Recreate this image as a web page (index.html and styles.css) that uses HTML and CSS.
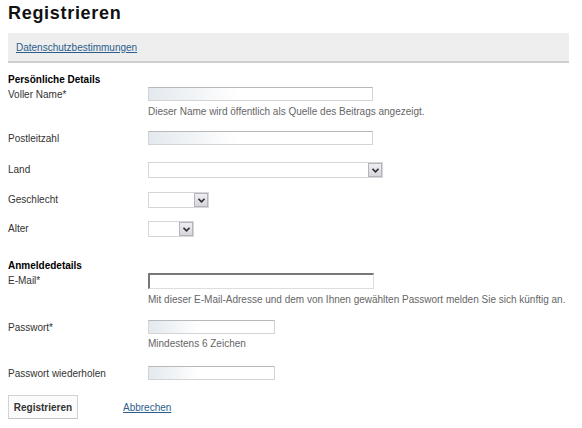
FILE: index.html
```html
<!DOCTYPE html>
<html lang="de">
<head>
<meta charset="utf-8">
<title>Registrieren</title>
<link rel="stylesheet" href="styles.css">
</head>
<body>
<div class="page">
  <h1 class="title">Registrieren</h1>
  <div class="bar"><a href="#" class="link">Datenschutzbestimmungen</a></div>

  <div class="section">
    <div class="section-title">Persönliche Details</div>
    <div class="row row-name">
      <label class="label">Voller Name*</label>
      <div class="field">
        <span class="input w224"></span>
        <div class="help">Dieser Name wird öffentlich als Quelle des Beitrags angezeigt.</div>
      </div>
    </div>
    <div class="row row-plz">
      <label class="label">Postleitzahl</label>
      <div class="field"><span class="input w224"></span></div>
    </div>
    <div class="row row-land">
      <label class="label">Land</label>
      <div class="field"><span class="select w234"><span class="arrow"><svg width="7" height="5" viewBox="0 0 7 5"><path d="M0.5 0.8 L3.5 3.8 L6.5 0.8" fill="none" stroke="#333" stroke-width="1.6"/></svg></span></span></div>
    </div>
    <div class="row row-gender">
      <label class="label">Geschlecht</label>
      <div class="field"><span class="select w60"><span class="arrow"><svg width="7" height="5" viewBox="0 0 7 5"><path d="M0.5 0.8 L3.5 3.8 L6.5 0.8" fill="none" stroke="#333" stroke-width="1.6"/></svg></span></span></div>
    </div>
    <div class="row row-age">
      <label class="label">Alter</label>
      <div class="field"><span class="select w46"><span class="arrow"><svg width="7" height="5" viewBox="0 0 7 5"><path d="M0.5 0.8 L3.5 3.8 L6.5 0.8" fill="none" stroke="#333" stroke-width="1.6"/></svg></span></span></div>
    </div>
  </div>

  <div class="section section2">
    <div class="section-title">Anmeldedetails</div>
    <div class="row row-mail">
      <label class="label">E-Mail*</label>
      <div class="field">
        <span class="input input-focus w226"></span>
        <div class="help">Mit dieser E-Mail-Adresse und dem von Ihnen gewählten Passwort melden Sie sich künftig an.</div>
      </div>
    </div>
    <div class="row row-pw">
      <label class="label">Passwort*</label>
      <div class="field">
        <span class="input w127"></span>
        <div class="help help-short">Mindestens 6 Zeichen</div>
      </div>
    </div>
    <div class="row row-pw2">
      <label class="label">Passwort wiederholen</label>
      <div class="field"><span class="input w127"></span></div>
    </div>
  </div>

  <div class="actions">
    <button class="button" type="button">Registrieren</button>
    <a href="#" class="link cancel">Abbrechen</a>
  </div>
</div>
</body>
</html>
```

FILE: styles.css
```css
html, body {
  margin: 0;
  padding: 0;
  background: #fff;
}
body {
  font-family: "Liberation Sans", Arial, sans-serif;
  font-size: 10px;
  color: #333;
}
.page {
  padding: 0 8px;
  width: 561px;
}
.title {
  margin: 0;
  padding-top: 3px;
  height: 30px;
  font-size: 18px;
  line-height: 20px;
  font-weight: bold;
  letter-spacing: 0.7px;
  color: #111;
}
.bar {
  height: 28px;
  background: #eeeeee;
  border-bottom: 2px solid #cfcfcf;
  padding-left: 8px;
  display: flex;
  align-items: center;
}
.link {
  color: #2b5d8c;
  text-decoration: underline;
  font-size: 10px;
}
.section {
  padding-top: 11px;
}
.section2 {
  padding-top: 23px;
}
.section-title {
  font-weight: bold;
  color: #000;
  font-size: 10px;
  line-height: 12px;
}
.row {
  display: grid;
  grid-template-columns: 140px 1fr;
  align-items: start;
}
.label {
  line-height: 14px;
  padding-top: 1px;
}
.field {
  display: flex;
  flex-direction: column;
  align-items: flex-start;
}
.input {
  display: block;
  box-sizing: border-box;
  height: 14px;
  border: 1px solid #d4d4d4;
  border-top-color: #b9b9b9;
  background: linear-gradient(to right, #e3e9ee 0%, #ffffff 40%, #ffffff 100%);
}
.input-focus {
  height: 16px;
  border: 1px solid #dedede;
  border-top: 2px solid #777;
  border-left: 2px solid #777;
  background: #fff;
}
.w224 { width: 225px; }
.w226 { width: 226px; }
.w127 { width: 127px; }
.select {
  display: flex;
  justify-content: flex-end;
  box-sizing: border-box;
  height: 16px;
  border: 1px solid #d6d6d6;
  background: #fff;
}
.w234 { width: 235px; }
.w60 { width: 61px; }
.w46 { width: 46px; }
.arrow {
  box-sizing: border-box;
  width: 14px;
  height: 14px;
  border: 1px solid #b4b4bc;
  background: linear-gradient(#eeeef2, #d6d6de);
  display: flex;
  align-items: center;
  justify-content: center;
}
.help {
  color: #666;
  line-height: 12px;
  margin-top: 5px;
}
.help-short { margin-top: 4px; }
.row-name { margin-top: 1px; }
.row-plz { margin-top: 13px; }
.row-land { margin-top: 16px; }
.row-gender { margin-top: 14px; }
.row-age { margin-top: 13px; }
.row-mail { margin-top: 1px; }
.row-pw { margin-top: 14px; }
.row-pw2 { margin-top: 16px; }
.actions {
  display: flex;
  align-items: center;
  margin-top: 14px;
}
.button {
  font-family: "Liberation Sans", Arial, sans-serif;
  font-size: 10px;
  font-weight: bold;
  color: #333;
  height: 24px;
  width: 70px;
  padding: 0;
  background: #fbfbfb;
  border: 1px solid #d2d2d2;
  border-bottom-color: #c4c4c4;
}
.cancel {
  margin-left: 45px;
  margin-top: 1px;
}
```
